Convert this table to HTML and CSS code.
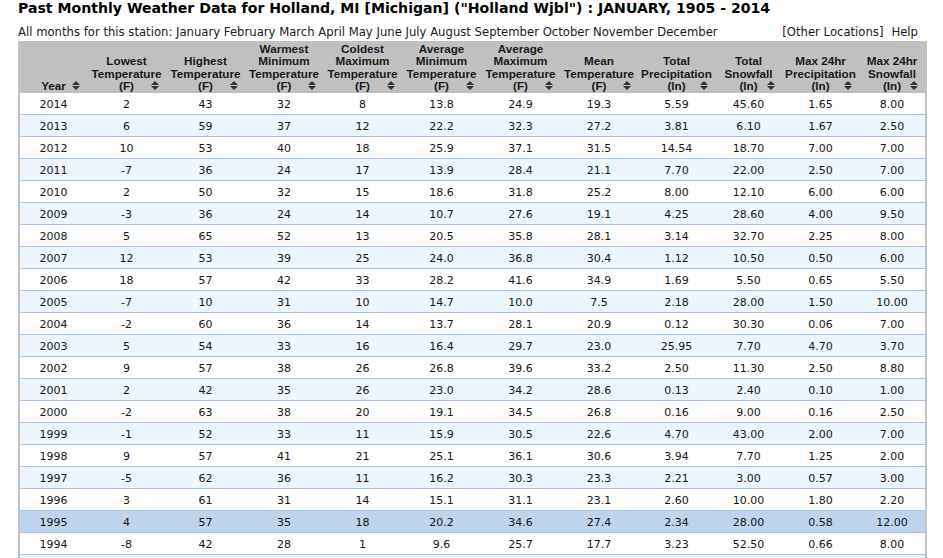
FILE: index.html
```html
<!DOCTYPE html>
<html lang="en">
<head>
<meta charset="utf-8">
<title>Past Monthly Weather Data for Holland, MI</title>
<link rel="stylesheet" href="styles.css">
</head>
<body>
<div class="page">
  <h1 class="title">Past Monthly Weather Data for Holland, MI [Michigan] ("Holland Wjbl") : JANUARY, 1905 - 2014</h1>
  <div class="navbar">
    <div class="months">All months for this station: <a href="#">January</a> <a href="#">February</a> <a href="#">March</a> <a href="#">April</a> <a href="#">May</a> <a href="#">June</a> <a href="#">July</a> <a href="#">August</a> <a href="#">September</a> <a href="#">October</a> <a href="#">November</a> <a href="#">December</a></div>
    <div class="links"><a href="#">[Other Locations]</a><a href="#" class="help">Help</a></div>
  </div>
  <table class="data">
    <colgroup>
      <col class="c1"><col class="c2"><col class="c3"><col class="c4"><col class="c5"><col class="c6"><col class="c7"><col class="c8"><col class="c9"><col class="c10"><col class="c11"><col class="c12">
    </colgroup>
    <thead>
      <tr>
        <th>Year<span class="sort"></span></th>
        <th>Lowest<br>Temperature<br>(F)<span class="sort"></span></th>
        <th>Highest<br>Temperature<br>(F)<span class="sort"></span></th>
        <th>Warmest<br>Minimum<br>Temperature<br>(F)<span class="sort"></span></th>
        <th>Coldest<br>Maximum<br>Temperature<br>(F)<span class="sort"></span></th>
        <th>Average<br>Minimum<br>Temperature<br>(F)<span class="sort"></span></th>
        <th>Average<br>Maximum<br>Temperature<br>(F)<span class="sort"></span></th>
        <th>Mean<br>Temperature<br>(F)<span class="sort"></span></th>
        <th>Total<br>Precipitation<br>(In)<span class="sort"></span></th>
        <th>Total<br>Snowfall<br>(In)<span class="sort"></span></th>
        <th>Max 24hr<br>Precipitation<br>(In)<span class="sort"></span></th>
        <th>Max 24hr<br>Snowfall<br>(In)<span class="sort"></span></th>
      </tr>
    </thead>
    <tbody>
      <tr><td>2014</td><td>2</td><td>43</td><td>32</td><td>8</td><td>13.8</td><td>24.9</td><td>19.3</td><td>5.59</td><td>45.60</td><td>1.65</td><td>8.00</td></tr>
      <tr class="alt"><td>2013</td><td>6</td><td>59</td><td>37</td><td>12</td><td>22.2</td><td>32.3</td><td>27.2</td><td>3.81</td><td>6.10</td><td>1.67</td><td>2.50</td></tr>
      <tr><td>2012</td><td>10</td><td>53</td><td>40</td><td>18</td><td>25.9</td><td>37.1</td><td>31.5</td><td>14.54</td><td>18.70</td><td>7.00</td><td>7.00</td></tr>
      <tr class="alt"><td>2011</td><td>-7</td><td>36</td><td>24</td><td>17</td><td>13.9</td><td>28.4</td><td>21.1</td><td>7.70</td><td>22.00</td><td>2.50</td><td>7.00</td></tr>
      <tr><td>2010</td><td>2</td><td>50</td><td>32</td><td>15</td><td>18.6</td><td>31.8</td><td>25.2</td><td>8.00</td><td>12.10</td><td>6.00</td><td>6.00</td></tr>
      <tr class="alt"><td>2009</td><td>-3</td><td>36</td><td>24</td><td>14</td><td>10.7</td><td>27.6</td><td>19.1</td><td>4.25</td><td>28.60</td><td>4.00</td><td>9.50</td></tr>
      <tr><td>2008</td><td>5</td><td>65</td><td>52</td><td>13</td><td>20.5</td><td>35.8</td><td>28.1</td><td>3.14</td><td>32.70</td><td>2.25</td><td>8.00</td></tr>
      <tr class="alt"><td>2007</td><td>12</td><td>53</td><td>39</td><td>25</td><td>24.0</td><td>36.8</td><td>30.4</td><td>1.12</td><td>10.50</td><td>0.50</td><td>6.00</td></tr>
      <tr><td>2006</td><td>18</td><td>57</td><td>42</td><td>33</td><td>28.2</td><td>41.6</td><td>34.9</td><td>1.69</td><td>5.50</td><td>0.65</td><td>5.50</td></tr>
      <tr class="alt"><td>2005</td><td>-7</td><td>10</td><td>31</td><td>10</td><td>14.7</td><td>10.0</td><td>7.5</td><td>2.18</td><td>28.00</td><td>1.50</td><td>10.00</td></tr>
      <tr><td>2004</td><td>-2</td><td>60</td><td>36</td><td>14</td><td>13.7</td><td>28.1</td><td>20.9</td><td>0.12</td><td>30.30</td><td>0.06</td><td>7.00</td></tr>
      <tr class="alt"><td>2003</td><td>5</td><td>54</td><td>33</td><td>16</td><td>16.4</td><td>29.7</td><td>23.0</td><td>25.95</td><td>7.70</td><td>4.70</td><td>3.70</td></tr>
      <tr><td>2002</td><td>9</td><td>57</td><td>38</td><td>26</td><td>26.8</td><td>39.6</td><td>33.2</td><td>2.50</td><td>11.30</td><td>2.50</td><td>8.80</td></tr>
      <tr class="alt"><td>2001</td><td>2</td><td>42</td><td>35</td><td>26</td><td>23.0</td><td>34.2</td><td>28.6</td><td>0.13</td><td>2.40</td><td>0.10</td><td>1.00</td></tr>
      <tr><td>2000</td><td>-2</td><td>63</td><td>38</td><td>20</td><td>19.1</td><td>34.5</td><td>26.8</td><td>0.16</td><td>9.00</td><td>0.16</td><td>2.50</td></tr>
      <tr class="alt"><td>1999</td><td>-1</td><td>52</td><td>33</td><td>11</td><td>15.9</td><td>30.5</td><td>22.6</td><td>4.70</td><td>43.00</td><td>2.00</td><td>7.00</td></tr>
      <tr><td>1998</td><td>9</td><td>57</td><td>41</td><td>21</td><td>25.1</td><td>36.1</td><td>30.6</td><td>3.94</td><td>7.70</td><td>1.25</td><td>2.00</td></tr>
      <tr class="alt"><td>1997</td><td>-5</td><td>62</td><td>36</td><td>11</td><td>16.2</td><td>30.3</td><td>23.3</td><td>2.21</td><td>3.00</td><td>0.57</td><td>3.00</td></tr>
      <tr><td>1996</td><td>3</td><td>61</td><td>31</td><td>14</td><td>15.1</td><td>31.1</td><td>23.1</td><td>2.60</td><td>10.00</td><td>1.80</td><td>2.20</td></tr>
      <tr class="selected"><td>1995</td><td>4</td><td>57</td><td>35</td><td>18</td><td>20.2</td><td>34.6</td><td>27.4</td><td>2.34</td><td>28.00</td><td>0.58</td><td>12.00</td></tr>
      <tr><td>1994</td><td>-8</td><td>42</td><td>28</td><td>1</td><td>9.6</td><td>25.7</td><td>17.7</td><td>3.23</td><td>52.50</td><td>0.66</td><td>8.00</td></tr>
      <tr class="alt"><td></td><td></td><td></td><td></td><td></td><td></td><td></td><td></td><td></td><td></td><td></td><td></td></tr>
    </tbody>
  </table>
</div>
</body>
</html>
```

FILE: styles.css
```css
html, body {
  margin: 0;
  padding: 0;
  background: #ffffff;
}

body {
  font-family: "DejaVu Sans", Verdana, sans-serif;
  color: #111111;
  overflow: hidden;
}

.page {
  padding: 0 0 0 18px;
  width: 909px;
}

.title {
  margin: 0;
  font-size: 14.1px;
  line-height: 16px;
  font-weight: bold;
  color: #000000;
  white-space: nowrap;
}

.navbar {
  display: flex;
  justify-content: space-between;
  align-items: baseline;
  margin-top: 10px;
  padding-right: 9px;
  font-size: 11.65px;
  line-height: 13px;
  color: #1a1a1a;
  white-space: nowrap;
}

.navbar a {
  color: #1a1a1a;
  text-decoration: none;
}

.links {
  display: flex;
  gap: 8px;
}

.data {
  margin-top: 2px;
  width: 909px;
  table-layout: fixed;
  border-collapse: separate;
  border-spacing: 0;
  border-left: 2px solid #c4c4c4;
  border-right: 2px solid #c4c4c4;
  font-size: 11px;
}

.c1 { width: 67px; }
.c2 { width: 79px; }
.c3 { width: 79px; }
.c4 { width: 78px; }
.c5 { width: 79px; }
.c6 { width: 79px; }
.c7 { width: 79px; }
.c8 { width: 78px; }
.c9 { width: 77px; }
.c10 { width: 67px; }
.c11 { width: 77px; }
.c12 { width: 66px; }

.data th {
  position: relative;
  height: 49px;
  padding: 2px 2px 1px;
  background: #c0c0c0;
  font-family: "Liberation Sans", Arial, sans-serif;
  font-size: 11.7px;
  line-height: 12.25px;
  font-weight: bold;
  color: #1a1a1a;
  text-align: center;
  vertical-align: bottom;
  white-space: nowrap;
}

.sort {
  position: absolute;
  right: 7px;
  bottom: 3px;
  width: 8px;
  height: 9px;
}

.sort::before,
.sort::after {
  content: "";
  position: absolute;
  left: 0;
  width: 0;
  height: 0;
  border-left: 4px solid transparent;
  border-right: 4px solid transparent;
}

.sort::before {
  top: 0;
  border-bottom: 4px solid #333333;
}

.sort::after {
  bottom: 0;
  border-top: 4px solid #333333;
}

.data td {
  height: 20px;
  padding: 1px 2px 0;
  border-bottom: 1px solid #a7c4e8;
  text-align: center;
  vertical-align: middle;
  color: #151515;
  background: #ffffff;
}

.data tr.alt td {
  background: #edf5fd;
}

.data tr.selected td {
  background: #bdd4ec;
}
```
